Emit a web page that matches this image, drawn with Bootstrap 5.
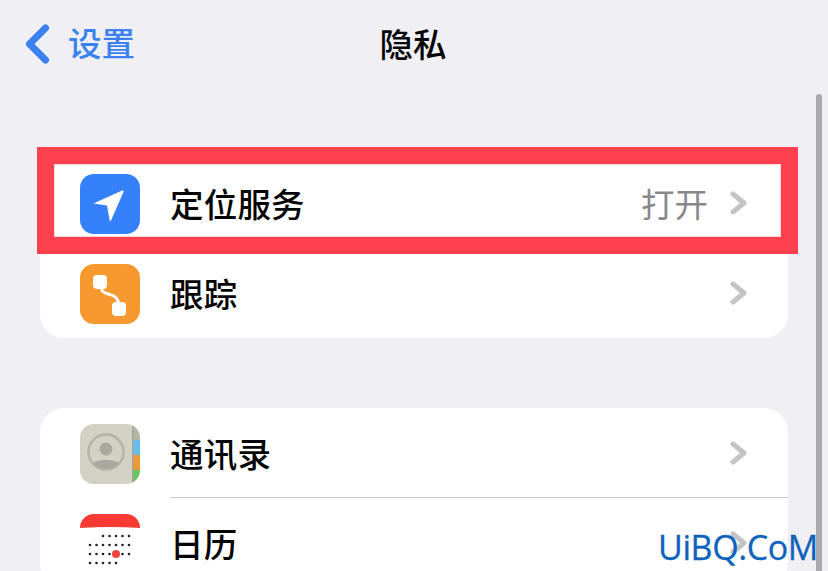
<!DOCTYPE html>
<html lang="zh-CN">
<head>
    <meta charset="UTF-8" />
    <meta name="viewport" content="width=device-width, initial-scale=1" />
    <title>隐私</title>
    <link href="https://cdn.jsdelivr.net/npm/bootstrap@5.3.2/dist/css/bootstrap.min.css" rel="stylesheet" />
    <style>
        html, body {
            height: 100%;
            overflow: hidden;
        }
        body {
            background: #efeff4;
            font-family: "Liberation Sans", "Noto Sans CJK SC", sans-serif;
            color: #050505;
        }
        .phone-screen {
            position: relative;
            height: 571px;
            overflow: hidden;
            padding: 0 40px;
        }
        .top-bar {
            position: relative;
            height: 90px;
            margin: 0 -40px 68px;
            padding-left: 25px;
        }
        .back-link {
            color: #3b82ee;
            font-size: 33.5px;
            font-weight: 500;
            line-height: 1;
            gap: 18px;
            text-decoration: none;
        }
        .back-link span {
            padding-top: 2px;
        }
        .page-title {
            position: absolute;
            left: 0;
            right: 2px;
            top: 29px;
            text-align: center;
            font-size: 33.5px;
            font-weight: 500;
            line-height: 34px;
        }
        .settings-group {
            position: relative;
            width: 748px;
            background: #fff;
            border-radius: 24px;
            margin-bottom: 70px;
        }
        .settings-row {
            height: 90px;
            padding: 16px 41px 14px 40px;
        }
        .row-label {
            font-size: 33.5px;
            font-weight: 500;
            line-height: 1;
            flex: 1;
            margin-left: 30px;
            padding-top: 3px;
            letter-spacing: .2px;
        }
        .row-divided {
            position: relative;
        }
        .row-divided::after {
            content: "";
            position: absolute;
            left: 130px;
            right: 0;
            bottom: 0;
            height: 1px;
            background: #c9c9cc;
        }
        .row-value {
            font-size: 33.5px;
            line-height: 1;
            color: #88888c;
            margin-right: 22px;
            padding-top: 3px;
        }
        .app-icon {
            width: 60px;
            height: 60px;
            border-radius: 14px;
            flex: none;
            display: block;
        }
        .row-arrow {
            width: 17px;
            height: 24px;
            flex: none;
            margin-bottom: 2px;
        }
        .red-frame {
            position: absolute;
            left: -3px;
            top: -11px;
            width: 761px;
            height: 107px;
            border: 17px solid #fe404f;
            box-shadow: inset 0 0 0 1px #ffd9dc;
            pointer-events: none;
        }
        .fake-scrollbar {
            position: absolute;
            left: 816px;
            top: 94px;
            width: 6px;
            height: 480px;
            border-radius: 3px 3px 0 0;
            background: #a9a9ae;
        }
        .site-mark {
            position: absolute;
            left: 658px;
            top: 525px;
            font-family: "Open Sans", sans-serif;
            font-size: 34px;
            line-height: 44px;
            letter-spacing: -.4px;
            color: #0f62bb;
            -webkit-text-stroke: .3px #0f62bb;
            white-space: nowrap;
        }
    </style>
</head>
<body>
<div class="phone-screen">
    <div class="top-bar">
        <a class="back-link d-inline-flex align-items-center pt-4" href="#">
            <svg width="25" height="40" viewBox="0 0 25 40">
                <path d="M20.5 4 L4.5 20 L20.5 36" fill="none" stroke="#3b82ee" stroke-width="7" stroke-linecap="round" stroke-linejoin="round"/>
            </svg>
            <span>设置</span>
        </a>
        <div class="page-title">隐私</div>
    </div>

    <div class="settings-group">
        <div class="settings-row d-flex align-items-center">
            <svg class="app-icon" viewBox="0 0 60 60">
                <rect width="60" height="60" fill="#3580fb"/>
                <path d="M13.500 29.500 L42 16.500 Q44 16 43.500 18 L31 46.500 Q30 48 29.500 46 L27 31.500 Z" fill="#fff"/>
            </svg>
            <div class="row-label">定位服务</div>
            <div class="row-value">打开</div>
            <svg class="row-arrow" viewBox="0 0 17 24"><path d="M3 3 L14 12 L3 21" fill="none" stroke="#c4c4c7" stroke-width="5" stroke-linecap="round" stroke-linejoin="round"/></svg>
        </div>
        <div class="settings-row d-flex align-items-center">
            <svg class="app-icon" viewBox="0 0 60 60">
                <rect width="60" height="60" fill="#f7992f"/>
                <path d="M21 24 C24 34 36 26 39 40" fill="none" stroke="#fff" stroke-width="3"/>
                <rect x="13" y="11" width="14" height="14" rx="4" fill="#fff"/>
                <rect x="32" y="38" width="14" height="14" rx="4" fill="#fff"/>
            </svg>
            <div class="row-label">跟踪</div>
            <svg class="row-arrow" viewBox="0 0 17 24"><path d="M3 3 L14 12 L3 21" fill="none" stroke="#c4c4c7" stroke-width="5" stroke-linecap="round" stroke-linejoin="round"/></svg>
        </div>
        <div class="red-frame"></div>
    </div>

    <div class="settings-group">
        <div class="settings-row row-divided d-flex align-items-center">
            <svg class="app-icon" viewBox="0 0 60 60">
                <defs><clipPath id="face-clip"><circle cx="26" cy="28" r="17"/></clipPath></defs>
                <rect width="60" height="60" fill="#d2d1c4"/>
                <rect x="53" y="0" width="7" height="16" fill="#b5b5a8"/>
                <rect x="53" y="16" width="7" height="16" fill="#66bdf0"/>
                <rect x="53" y="31" width="7" height="16" fill="#f09a36"/>
                <rect x="53" y="46" width="7" height="14" fill="#69c45f"/>
                <rect x="52" y="0" width="1.500" height="60" fill="#a5a59a"/>
                <circle cx="26" cy="28" r="17.500" fill="none" stroke="#b4b3a9" stroke-width="2.500"/>
                <circle cx="26" cy="25" r="6.500" fill="#a9a89f"/>
                <path d="M6 48 C8 38 18 36 26 36 C34 36 44 38 46 48 Z" fill="#a9a89f" clip-path="url(#face-clip)"/>
            </svg>
            <div class="row-label">通讯录</div>
            <svg class="row-arrow" viewBox="0 0 17 24"><path d="M3 3 L14 12 L3 21" fill="none" stroke="#c4c4c7" stroke-width="5" stroke-linecap="round" stroke-linejoin="round"/></svg>
        </div>
        <div class="settings-row d-flex align-items-center">
            <svg class="app-icon" viewBox="0 0 60 60">
                <rect width="60" height="60" fill="#fff"/>
                <path d="M0 0 H60 V14 Q30 12 0 14 Z" fill="#f73b34"/>
                <g fill="#222">
                    <circle cx="23" cy="22" r="1.300"/><circle cx="29.500" cy="22" r="1.300"/><circle cx="36" cy="22" r="1.300"/><circle cx="42.500" cy="22" r="1.300"/><circle cx="49" cy="22" r="1.300"/>
                    <circle cx="10" cy="31" r="1.300"/><circle cx="16.500" cy="31" r="1.300"/><circle cx="23" cy="31" r="1.300"/><circle cx="29.500" cy="31" r="1.300"/><circle cx="36" cy="31" r="1.300"/><circle cx="42.500" cy="31" r="1.300"/><circle cx="49" cy="31" r="1.300"/>
                    <circle cx="10" cy="40" r="1.300"/><circle cx="16.500" cy="40" r="1.300"/><circle cx="23" cy="40" r="1.300"/><circle cx="29.500" cy="40" r="1.300"/><circle cx="42.500" cy="40" r="1.300"/><circle cx="49" cy="40" r="1.300"/>
                    <circle cx="10" cy="49" r="1.300"/><circle cx="16.500" cy="49" r="1.300"/><circle cx="23" cy="49" r="1.300"/><circle cx="29.500" cy="49" r="1.300"/><circle cx="36" cy="49" r="1.300"/>
                </g>
                <circle cx="36" cy="40" r="4" fill="#f0453f"/>
            </svg>
            <div class="row-label">日历</div>
            <svg class="row-arrow" viewBox="0 0 17 24"><path d="M3 3 L14 12 L3 21" fill="none" stroke="#c4c4c7" stroke-width="5" stroke-linecap="round" stroke-linejoin="round"/></svg>
        </div>
    </div>

    <div class="fake-scrollbar"></div>
    <div class="site-mark">UiBQ.CoM</div>
</div>
<script src="https://cdn.jsdelivr.net/npm/bootstrap@5.3.2/dist/js/bootstrap.bundle.min.js"></script>
</body>
</html>
